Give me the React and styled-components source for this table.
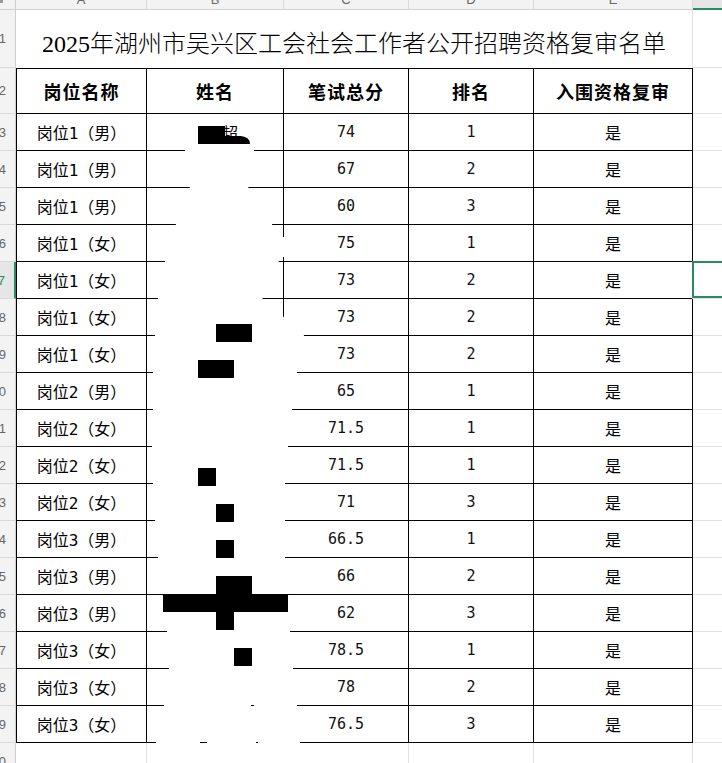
import React from "react";
import styled, { createGlobalStyle, css } from "styled-components";

const GRID = "#e1e1e1";
const GREEN = "#2a8a62";
const CJK = `"Noto Sans CJK SC", sans-serif`;

const GlobalStyle = createGlobalStyle`
  html, body {
    margin: 0;
    padding: 0;
    background: #fff;
  }
  body {
    font-family: ${CJK};
    color: #000;
  }
`;

const Page = styled.div`
  position: relative;
  width: 722px;
  height: 763px;
  overflow: hidden;
  background: #fff;
`;

const Sheet = styled.div`
  display: grid;
  grid-template-columns: 16px 131px 137px 125px 125px 159px 80px;
  grid-template-rows: 10px 58px 46px repeat(18, 37px);
  width: 773px;
`;

const Corner = styled.div`
  position: relative;
  background: #f3f3f3;
  border-right: 1px solid #cfcfcf;
  border-bottom: 1px solid #cfcfcf;
  &::after {
    content: "";
    position: absolute;
    left: 0;
    top: 0;
    width: 3px;
    height: 3px;
    background: #9a9a9a;
  }
`;

const ColHead = styled.div`
  display: flex;
  justify-content: center;
  align-items: flex-end;
  padding-bottom: 3px;
  overflow: hidden;
  background: ${(p) => (p.$active ? "#e6e6e6" : "#f3f3f3")};
  border-right: 1px solid #dadada;
  border-bottom: ${(p) => (p.$active ? `2px solid ${GREEN}` : "1px solid #cfcfcf")};
  color: #666;
  font: 13px/13px "Liberation Sans", sans-serif;
`;

const RowHead = styled.div`
  display: flex;
  align-items: center;
  justify-content: flex-end;
  padding-right: 9px;
  overflow: hidden;
  white-space: nowrap;
  background: ${(p) => (p.$active ? "#e6e6e6" : "#f3f3f3")};
  border-bottom: 1px solid #dadada;
  border-right: ${(p) => (p.$active ? `2px solid ${GREEN}` : "1px solid #cfcfcf")};
  color: ${(p) => (p.$active ? GREEN : "#666")};
  font: 13px "Liberation Sans", sans-serif;
`;

const TitleCell = styled.div`
  grid-column: 2 / span 5;
  display: flex;
  align-items: center;
  justify-content: center;
  padding-top: 5px;
  border-right: 1px solid ${GRID};
  font: 300 24px "Liberation Serif", "Noto Sans CJK SC", serif;
  white-space: nowrap;
`;

const tableBorders = css`
  border-right: 1px solid #000;
  border-bottom: 1px solid #000;
  border-left: ${(p) => (p.$first ? "1px solid #000" : "none")};
`;

const HeadCell = styled.div`
  display: flex;
  align-items: center;
  justify-content: center;
  border-top: 1px solid #000;
  ${tableBorders}
  font: 700 18px ${CJK};
  letter-spacing: 1px;
`;

const DataCell = styled.div`
  display: flex;
  align-items: center;
  justify-content: center;
  ${tableBorders}
  font: 16px "DejaVu Sans Mono", "Noto Sans CJK SC", monospace;
  white-space: nowrap;
`;

const Digits = styled.span`
  font-size: 15px;
  color: #111;
`;

const NameText = styled.span`
  padding-left: 30px;
  font-family: ${CJK};
`;

const BlankCell = styled.div`
  border-right: 1px solid ${GRID};
  border-bottom: 1px solid ${GRID};
  ${(p) =>
    p.$selected &&
    css`
      margin: -1px 0 0 -1px;
      box-shadow: inset 0 0 0 2px ${GREEN};
    `}
`;

const Redaction = styled.svg`
  position: absolute;
  left: 0;
  top: 0;
  pointer-events: none;
`;

const headers = ["岗位名称", "姓名", "笔试总分", "排名", "入围资格复审"];

const rows = [
  ["岗位1（男）", "74", "1"],
  ["岗位1（男）", "67", "2"],
  ["岗位1（男）", "60", "3"],
  ["岗位1（女）", "75", "1"],
  ["岗位1（女）", "73", "2"],
  ["岗位1（女）", "73", "2"],
  ["岗位1（女）", "73", "2"],
  ["岗位2（男）", "65", "1"],
  ["岗位2（女）", "71.5", "1"],
  ["岗位2（女）", "71.5", "1"],
  ["岗位2（女）", "71", "3"],
  ["岗位3（男）", "66.5", "1"],
  ["岗位3（男）", "66", "2"],
  ["岗位3（男）", "62", "3"],
  ["岗位3（女）", "78.5", "1"],
  ["岗位3（女）", "78", "2"],
  ["岗位3（女）", "76.5", "3"],
];

// white patch over the name column: left edge, then right edge bottom-up
const maskLeft = [
  [188, 145], [185, 150], [190, 187], [176, 224], [165, 261], [158, 298],
  [155, 335], [153, 372], [153, 409], [152, 446], [153, 483], [155, 520],
  [158, 557], [163, 594], [167, 631], [169, 668], [164, 705], [156, 742], [158, 763],
];
const maskRight = [
  [300, 763], [300, 742], [297, 705], [293, 668], [290, 631], [288, 594],
  [285, 557], [285, 520], [285, 483], [288, 446], [292, 409], [297, 372],
  [304, 335], [262, 298], [279, 261], [272, 224], [248, 187], [254, 150], [252, 145],
];

const blocks = [
  [198, 126, 27, 18],
  [216, 324, 36, 18],
  [198, 360, 36, 18],
  [198, 468, 18, 18],
  [216, 504, 18, 18],
  [216, 540, 18, 18],
  [216, 576, 36, 18],
  [163, 594, 125, 18],
  [216, 612, 18, 18],
  [234, 648, 18, 18],
  [200, 742, 7, 1],
  [256, 742, 2, 1],
  [251, 705, 3, 1],
];

export default function App() {
  return (
    <>
      <GlobalStyle />
      <Page>
        <Sheet>
          <Corner />
          {["A", "B", "C", "D", "E", "F"].map((l) => (
            <ColHead key={l} $active={l === "F"}>
              {l}
            </ColHead>
          ))}

          <RowHead>1</RowHead>
          <TitleCell>2025年湖州市吴兴区工会社会工作者公开招聘资格复审名单</TitleCell>
          <BlankCell />

          <RowHead>2</RowHead>
          {headers.map((h, i) => (
            <HeadCell key={h} $first={i === 0}>
              {h}
            </HeadCell>
          ))}
          <BlankCell />

          {rows.map((r, i) => {
            const n = i + 3;
            return (
              <React.Fragment key={n}>
                <RowHead $active={n === 7}>{n}</RowHead>
                <DataCell $first>{r[0]}</DataCell>
                <DataCell>{i === 0 && <NameText>超</NameText>}</DataCell>
                <DataCell>
                  <Digits>{r[1]}</Digits>
                </DataCell>
                <DataCell>
                  <Digits>{r[2]}</Digits>
                </DataCell>
                <DataCell>是</DataCell>
                <BlankCell $selected={n === 7} />
              </React.Fragment>
            );
          })}

          <RowHead>20</RowHead>
          {[0, 1, 2, 3, 4, 5].map((k) => (
            <BlankCell key={k} />
          ))}
        </Sheet>

        <Redaction width="722" height="763" viewBox="0 0 722 763">
          <polygon
            fill="#fff"
            points={[...maskLeft, ...maskRight].map((p) => p.join(",")).join(" ")}
          />
          <rect x="281" y="237" width="5" height="20" fill="#fff" />
          {blocks.map(([x, y, w, h], k) => (
            <rect key={k} x={x} y={y} width={w} height={h} fill="#000" />
          ))}
          <path d="M225 136 H241 Q250 137 250 144 H225 Z" fill="#000" />
        </Redaction>
      </Page>
    </>
  );
}
